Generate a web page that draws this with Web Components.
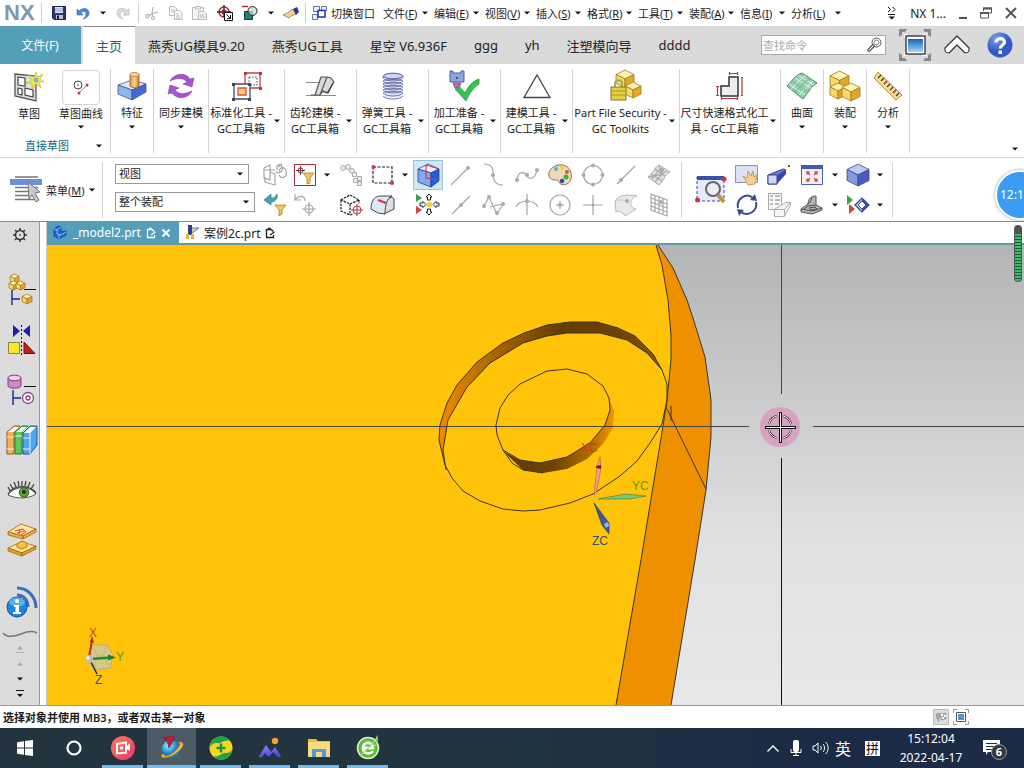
<!DOCTYPE html>
<html lang="zh-CN">
<head>
<meta charset="utf-8">
<meta name="viewport" content="width=device-width, initial-scale=1">
<title>NX</title>
<style>
html,body{margin:0;height:100%}
body{font-family:"Noto Sans","Noto Sans CJK SC",sans-serif;font-size:11px;color:#1c1c1c;background:#fff}
</style>
</head>
<body>
<nx-app></nx-app>
<script>
const BASE = `*{box-sizing:border-box}
button{font:inherit;color:inherit;background:none;border:0;padding:0;margin:0;display:inline-flex;align-items:center;justify-content:center;cursor:pointer}
u{text-underline-offset:1px}`;

const define = (name, css, html) => {
  customElements.define(name, class extends HTMLElement {
    constructor() { super(); this.attachShadow({mode: 'open'}); }
    connectedCallback() {
      if (this.shadowRoot.firstChild) return;
      const tpl = document.createElement('template');
      tpl.innerHTML = `<style>${BASE}${css}</style>` + (typeof html === 'function' ? html(this) : html);
      this.shadowRoot.append(tpl.content.cloneNode(true));
    }
  });
};

/* Small isometric box used by several pictograms */
const box = (x, y, s, a, b, c, k) => {
  const h = s / 2, q = s / 4;
  return `<g stroke="${k}" stroke-width=".8" stroke-linejoin="round"><path fill="${a}" d="M${x} ${y+q}L${x+h} ${y}L${x+s} ${y+q}L${x+h} ${y+h}Z"/><path fill="${b}" d="M${x} ${y+q}V${y+q+h}L${x+h} ${y+s}V${y+h}Z"/><path fill="${c}" d="M${x+s} ${y+q}V${y+q+h}L${x+h} ${y+s}V${y+h}Z"/></g>`;
};
const gold = (x, y, s) => box(x, y, s, '#fdf3b4', '#f6d96a', '#e0a92a', '#a57a1a');
const dot = (x, y, r = 2) => `<circle cx="${x}" cy="${y}" r="${r}" fill="#aaa"/>`;
const grey = 'fill="none" stroke="#a6a6a6" stroke-width="1.2"';

const ICONS = {
  caret: [6, 4, `<path d="M0 .5H6L3 3.5Z" fill="#111"/>`],
  caretUp: [6, 4, `<path d="M0 3.5H6L3 .5Z" fill="#aaa"/>`],
  save: [14, 14, `<path d="M.5 .5H13.5V13.5H2L.5 12Z" fill="#2b3672" stroke="#1c2452"/><path d="M3 1H11V7H3Z" fill="#dfe6f4"/><path d="M3 3H11M3 5H11" stroke="#7583b5" stroke-width=".7"/><path d="M4 9H11V13H4Z" fill="#b7c0d8"/><path d="M5 9.500H7V13H5Z" fill="#223"/>`],
  undo: [14, 14, `<path d="M1 3V9H7L5 7C7 5 10 5 10 8C10 10 9 12 7 13C11 12 13 10 13 7C13 2 7 1 3 5Z" fill="#4e87d4" stroke="#2d62b0" stroke-width=".6"/>`],
  redo: [14, 14, `<path d="M13 3V9H7L9 7C7 5 4 5 4 8C4 10 5 12 7 13C3 12 1 10 1 7C1 2 7 1 11 5Z" fill="#ddd" stroke="#bbb" stroke-width=".8"/>`],
  cut: [14, 14, `<g fill="none" stroke="#b5b5b5" stroke-width="1.2"><path d="M8 1L7 8L3 10M13 6L7 8L8 11"/><circle cx="2.500" cy="10" r="1.700"/><circle cx="8" cy="12" r="1.500"/></g>`],
  copy: [14, 14, `<g fill="#fafafa" stroke="#bbb"><path d="M.5 .5H5L8 3V9.500H.5Z"/><path d="M5.500 4.500H10L13 7V13.500H5.500Z"/><path d="M2 4H5M2 6H5M7 8H10M7 10H11M7 12H11"/></g>`],
  paste: [15, 14, `<g fill="#f4f4f4" stroke="#bbb"><path d="M.5 1.500H11.500V13.500H.5Z"/><path d="M3.500 .5H8.500V3H3.500Z"/><path d="M6.500 5.500H12L14.500 8V13.500H6.500Z"/><path d="M8 9H12M8 11H13"/></g>`],
  target: [16, 16, `<g fill="none" stroke="#a8202c" stroke-width="1.300"><circle cx="7" cy="7" r="5"/><path d="M7 0V12M0 7H14" stroke="#222"/><circle cx="7" cy="7" r="2"/></g><path d="M7.500 7.500H15.500V15.500H7.500Z" fill="#fff" stroke="#111"/><path d="M9.500 9.500L13 13M13.500 10V13.500H10" stroke="#111" fill="none"/>`],
  combine: [16, 16, `<path d="M0 1.500H6" stroke="#d22" stroke-width="1.500"/><path d="M2.500 6.500H10.500V14.500H2.500Z" fill="#23806f" stroke="#134"/><circle cx="10.500" cy="6" r="4.500" fill="#cfd9d2" fill-opacity=".7" stroke="#222"/>`],
  hand: [16, 12, `<path d="M0 8L6 5C7 3 9 2 11 3L13 7L8 9L6 11L2 9Z" fill="#f5cf98" stroke="#a1713a" stroke-width=".8"/><path d="M10 2L14 0L16 5L13 8Z" fill="#2c2f9e"/>`],
  windows: [15, 14, `<g fill="#eef3fa" stroke="#56789e"><path d="M1.500 .5H7.500V5.500H1.500Z"/><path d="M9.500 .5H14.500V4.500H9.500Z"/><path d="M.5 8.500H5.500V13.500H.5Z"/></g><path d="M6 4.500H13V11H6Z" fill="#fff" stroke="#1d2fc0" stroke-width="1.500"/>`],
  overflow: [10, 14, `<path d="M1 1L3.500 3.500L1 6M5.500 1L8 3.500L5.500 6M1 8.500H8" fill="none" stroke="#111"/><path d="M1.500 10.500H8L4.700 13.500Z" fill="#111"/>`],
  min: [8, 12, `<path d="M0 11H8" stroke="#555" stroke-width="2"/>`],
  restore: [12, 12, `<path d="M3.500 4V1H11.500V6H9" fill="none" stroke="#555"/><path d="M3 1.500H12" stroke="#555" stroke-width="2"/><path d="M.5 5.500H8.500V11H.5Z" fill="#fff" stroke="#555"/><path d="M0 6H9" stroke="#555" stroke-width="2"/>`],
  close: [12, 12, `<path d="M1 1L11 11M11 1L1 11" stroke="#555" stroke-width="2"/>`],
  search: [16, 16, `<circle cx="9.500" cy="5.500" r="4.500" fill="none" stroke="#555" stroke-width="1"/><circle cx="9.500" cy="5.500" r="2.500" fill="none" stroke="#666" stroke-width=".8"/><path d="M6 9L2 13" stroke="#333" stroke-width="3.200" stroke-linecap="round"/><path d="M6 9L2 13" stroke="#fff" stroke-width="1.200" stroke-linecap="round"/>`],
  full: [32, 32, `<path d="M0 8V0H8L6 3H3V6ZM24 0H32V8L29 6V3H26ZM0 24V32H8L6 29H3V26ZM32 24V32H24L26 29H29V26Z" fill="#888"/><path d="M5 5L9 5L5 9ZM27 5V9L23 5ZM5 27V23L9 27ZM27 27H23L27 23Z" fill="#fff"/><path d="M7 7H26V25H7Z" fill="#fff" stroke="#444" stroke-width="1.500"/><linearGradient id="g" x2="0" y2="1"><stop stop-color="#1265ba"/><stop offset="1" stop-color="#a5d2fa"/></linearGradient><path d="M9 10H24V23H9Z" fill="url(#g)"/>`],
  chevUp: [26, 20, `<path d="M13 1L25 13Q26 18 21 18L13 10L5 18Q0 18 1 13Z" fill="#fff" stroke="#333" stroke-width="1.200" stroke-linejoin="round"/>`],
  help: [26, 26, `<radialGradient id="g" cx=".35" cy=".25"><stop stop-color="#7da0ea"/><stop offset="1" stop-color="#315bc6"/></radialGradient><circle cx="13" cy="13" r="12.500" fill="url(#g)"/><path d="M9 10.500C9 5.500 17.500 5.500 17.500 10C17.500 13 13.300 13 13.300 16.500" fill="none" stroke="#fff" stroke-width="3.200"/><path d="M11.500 18.500H15V22H11.500Z" fill="#fff"/>`],
  sketch: [30, 30, `<path d="M1 2L22 4V29L1 24Z" fill="#dfe3e0" stroke="#555" stroke-width="1.300"/><g fill="#fff" stroke="#444" stroke-width="1.200"><path d="M4 5L11 6V14L4 13Z"/><path d="M4 16L8 17V23L4 22Z"/><path d="M11 16L19 18V25L11 23Z"/></g><path d="M22 0L23.500 5L29 2L26 7L30 10L25 10L27 16L22 12L18 17V11L12 11L18 8L14 3L20 5Z" fill="#f7e648" stroke="#b9a947" stroke-width=".6"/><circle cx="22" cy="8" r="2.500" fill="#74b9dd"/>`],
  curve: [18, 16, `<circle cx="6" cy="6" r="4" fill="none" stroke="#444"/><circle cx="6" cy="6" r=".8" fill="#333"/><path d="M7 14L15 6" stroke="#888"/><circle cx="7" cy="14" r="1.500" fill="#c2393c"/><circle cx="15" cy="6" r="1.500" fill="#c2393c"/>`],
  feature: [30, 30, `<linearGradient id="g"><stop stop-color="#e8912f"/><stop offset=".5" stop-color="#ffd596"/><stop offset="1" stop-color="#d2761b"/></linearGradient><g stroke="#3d5792" stroke-width=".8"><path fill="#ddeafa" d="M1 14L15 9L29 13L15 19Z"/><path fill="#8fb6ec" d="M1 14V23L15 29V19Z"/><path fill="#3f6dcc" d="M29 13V21L15 29V19Z"/></g><path d="M13 3V15C14 17 21 17 22 15V3" fill="url(#g)" stroke="#a55c19" stroke-width=".8"/><ellipse cx="17.500" cy="3.500" rx="4.500" ry="2" fill="#ffd9a3" stroke="#b56c23" stroke-width=".8"/>`],
  sync: [28, 28, `<g fill="#a354cf" stroke="#8a3fb5" stroke-width=".6"><path d="M3 9C7 1 19 0 23 7L27 6L25 15L16 12L20 10C16 5 9 6 3 9Z"/><path d="M25 19C21 27 10 28 5 21L1 22L3 13L12 16L8 18C12 23 19 22 25 19Z"/></g>`],
  standard: [30, 30, `<g fill="none" stroke="#b14a50" stroke-width="1.300"><path d="M13 2H28V17H13Z"/></g><path d="M17 6H25V14H17Z" fill="none" stroke="#444" stroke-dasharray="1.500 1.500"/><path d="M2 13H18V28H2Z" fill="#fff" stroke="#4a4a5c" stroke-width="1.300"/><path d="M6 17H14V24H6Z" fill="#ffc774" stroke="#d6503a" stroke-width="1.300"/><g fill="#b9393f"><path d="M12 1h3v3h-3zM27 1h3v3h-3zM27 16h3v3h-3z"/></g><g fill="#44445c"><path d="M0 12h3v3H0zM16 12h3v3h-3zM0 27h3v3H0zM16 27h3v3h-3z"/></g>`],
  gear: [30, 26, `<path d="M0 9.500H28M0 22.500H30" stroke="#888"/><path d="M5 22H9L15 4H21L14 22H10M14 22L17 18L21 20L28 9L25 5L21 4Z" fill="#dcdcdc" stroke="#555" stroke-width="1.200" stroke-linejoin="round"/><path d="M16 18L22 20L27 10" fill="none" stroke="#444" stroke-width="1.300"/>`],
  spring: [22, 28, `<rect x="3" y="3" width="16" height="22" fill="#e4e7f8"/><g fill="none" stroke="#5058a0" stroke-width="1"><ellipse cx="11" cy="4" rx="9.500" ry="2.800" fill="#cfd5f0"/><path d="M1 6C5 10 17 10 21 6M1 9C5 13 17 13 21 9M1 12C5 16 17 16 21 12M1 15C5 19 17 19 21 15M1 18C5 22 17 22 21 18M1 21C5 25 17 25 21 21M1 24C5 28 17 28 21 24M1 4V6M21 4V6M1 9C4 7 18 7 21 9M1 12C4 10 18 10 21 12M1 15C4 13 18 13 21 15M1 18C4 16 18 16 21 18M1 21C4 19 18 19 21 21" stroke-width=".8"/></g>`],
  check: [30, 30, `<path d="M0 0H3V2H11V0H14V11H0Z" fill="#8ca5de" stroke="#4c5f9c"/><circle cx="7" cy="7" r="1" fill="#334"/><path d="M3 12H11L9 17H5Z" fill="#c65fc8" stroke="#83398a" stroke-width=".7"/><path d="M5 18L9 15L15 22C19 14 23 10 29 8V13C23 17 19 23 16 30Z" fill="#37c14e" stroke="#1f8f3a" stroke-width=".7"/>`],
  triangle: [30, 26, `<path d="M15 2L28 24.500H2Z" fill="none" stroke="#444" stroke-width="1.300"/>`],
  security: [32, 32, gold(6,0,18)+gold(15,12,16)+`<path d="M5 18V14C5 9 12 9 12 14V18" fill="none" stroke="#a9a36a" stroke-width="2"/><rect x="1" y="17" width="15" height="13" fill="#e5d13c" stroke="#827327"/><path d="M1 21H16M1 25H16" stroke="#a8962c"/>`],
  dims: [28, 28, `<path d="M5 14H13V5H22V24H5Z" fill="#eee" stroke="#333" stroke-width="1.500"/><g stroke="#b2383d" stroke-width="1.200" fill="none"><path d="M13.500 0V3M21.500 0V3M13 1.500H22M25 5.500H27M25 23.500H27M26 5V24M0 14.500H3M0 23.500H3M1.500 14V24M5 26.500H22M5.500 25V28M21.500 25V28"/></g>`],
  surface: [32, 28, `<path d="M1 14C6 9 9 3 16 1L31 11C25 14 22 21 17 27Z" fill="#8fcfab" stroke="#4b8465"/><path d="M5 17C10 13 14 6 20 4M9 20C14 16 18 9 24 7M13 23C18 19 22 12 27 9M6 9L22 20M9 6L25 16M12 3L28 13M3 12L19 23" fill="none" stroke="#e0f6e8" stroke-width="1"/><path d="M6 9L22 20M9 20C14 16 18 9 24 7" fill="none" stroke="#4b8465" stroke-width=".7"/>`],
  assembly: [30, 30, gold(0,0,19)+gold(0,12,16)+gold(12,12,18)],
  ruler: [30, 30, `<path d="M5 1L29 24L23 29L1 7Z" fill="#f8dc94" stroke="#b88a3b"/><path d="M8 4L5 7M11 7L8 10M14 10L11 13M17 13L14 16M20 16L17 19M23 19L20 22M26 22L23 25" stroke="#334" stroke-width="1.200"/><path d="M14 10L11 13M23 19L20 22" stroke="#d33" stroke-width="1.300"/>`],
  menu: [32, 28, `<path d="M5 1H28M5 11.500H28M5 15.500H28M5 19.500H24M5 23.500H24" stroke="#777" stroke-width="1.500"/><rect y="3" width="32" height="6" fill="#6b8fdc"/><path d="M18 6L30 16L25 17L29 24L26 26L22 19L19 23Z" fill="#c9c9c9" stroke="#777"/>`],
  lnkGrey: [24, 24, `<g ${grey}><path d="M1 5L7 2V17L1 15ZM7 9L12 11V22L2 19V14M2 7H12M7 2V12"/><path d="M15 4L19 1M15 7C11 3 17 -1 19 4S14 12 13 8M17 9C15 5 21 2 23 8S18 17 16 12"/></g>`],
  filter: [22, 22, `<path d="M.5 .5H21.500V21.500H.5Z" fill="#fff" stroke="#a82838"/><circle cx="6.500" cy="6.500" r="2.500" fill="none" stroke="#733"/><path d="M6.500 2V11M2 6.500H11" stroke="#733"/><path d="M9 9H20L16 14V19L13 20V14Z" fill="#f1c757" stroke="#b37f23" stroke-width=".8"/>`],
  chain: [24, 24, `<g fill="#eee" stroke="#aaa"><circle cx="4" cy="5" r="2.500"/><circle cx="9" cy="4" r="2.500"/><circle cx="13" cy="8" r="2.500"/><path d="M13.500 9.500h4v4h-4zM14.500 15.500h4v4h-4zM18.500 18.500h4v4h-4zM18.500 13.500h4v4h-4z"/></g>`],
  marquee: [24, 22, `<path d="M2 3H21V19H2Z" fill="none" stroke="#222" stroke-width="1.200" stroke-dasharray="3 1.500"/><circle cx="2.500" cy="3" r="2" fill="#c13a3e"/><circle cx="21" cy="19" r="2" fill="#c13a3e"/>`],
  cubeSel: [30, 30, `<rect width="30" height="30" fill="#cfe8f2"/><path d="M.5 .5H29.500V29.500H.5Z" fill="none" stroke="#94c4d8"/><g stroke="#2b3f8c" stroke-width=".8"><path fill="#eaf3ff" d="M5 9L15 4L26 9L18 13Z"/><path fill="#7fa9f4" d="M5 9L18 13V27L5 22Z"/><path fill="#1a5fe0" d="M26 9V21L18 27V13Z"/></g><path d="M13 5V18L26 20M13 5L26 9" fill="none" stroke="#d23657" stroke-width="1.200"/>`],
  line1: [22, 22, `<path d="M1 21L18 4" ${grey}/>${dot(18,4)}`],
  arc1: [22, 24, `<path d="M1 1C9 1 10 5 10 11S12 22 20 22" ${grey}/>${dot(10,12)}`],
  spline: [24, 18, `<path d="M2 14C3 5 9 5 12 10S21 12 22 3" ${grey}/>${dot(2,14)}${dot(12,9)}${dot(22,4)}`],
  palette: [24, 22, `<path d="M10 1C20 -1 25 8 23 15C21 22 12 22 11 18C10 14 6 18 2 14C-2 9 4 2 10 1Z" fill="#f1d7b4" stroke="#8f7458"/><circle cx="8" cy="5" r="2" fill="#4db1d2"/><circle cx="14" cy="4" r="2" fill="#f0d330"/><circle cx="19" cy="8" r="2" fill="#e2562f"/><circle cx="18" cy="13" r="2.500" fill="#34b34a"/><circle cx="14" cy="17" r="2.200" fill="#333fc0"/>`],
  circ4: [24, 24, `<circle cx="12" cy="12" r="9.500" ${grey}/>${dot(12,2.5)}${dot(12,21.5)}${dot(2.5,12)}${dot(21.5,12)}`],
  line2: [20, 20, `<path d="M1 19L19 1" ${grey}/>${dot(5,15)}`],
  mesh: [24, 22, `<path d="M1 13C7 9 7 3 12 1L23 8C17 11 17 17 12 21Z" fill="#e2e2e2" stroke="#aaa"/><path d="M5 15C9 11 11 5 16 4M8 18C13 13 14 9 20 7M4 10L15 17M8 5L18 12M2 13L15 10L12 2" ${grey}/>${dot(15,6)}`],
  undoFilter: [24, 24, `<path d="M8 1L1 7L8 12V9C12 9 15 6 14 1C12 5 10 5 8 5Z" fill="#4ba3ae" stroke="#277782" stroke-width=".7"/><path d="M12 12H23L19 17V21L16 23V17Z" fill="#f1c757" stroke="#b37f23" stroke-width=".8"/>`],
  undoTarget: [24, 24, `<path d="M2 1V7H8M2 7C6 1 12 3 12 8" ${grey}/><circle cx="16" cy="16" r="4" ${grey}/><path d="M16 9V23M9 16H23" ${grey}/>`],
  cubeDash: [24, 24, `<path d="M2 7L11 2L20 7L11 11ZM2 7V18L11 22L14 21M11 11V22M20 7V11" fill="none" stroke="#222" stroke-width="1.200" stroke-dasharray="2.500 1"/><circle cx="18" cy="17" r="4" fill="none" stroke="#b33"/><path d="M18 11V23M12 17H24" stroke="#b33"/>`],
  solid: [26, 22, `<path d="M12 6L22 3L24 5V15L14 20Z" fill="#ddd" stroke="#445"/><path d="M1 15C1 5 6 2 11 2L22 2C17 4 15 11 15 20L8 19Z" fill="#dfe9f5" stroke="#445"/><path d="M8 6L16 9" stroke="#d33" stroke-width="2"/>`],
  points: [26, 24, `<path d="M1 1L7 5L1 9Z" fill="#35a34d"/><path d="M1 13L7 17L1 21Z" fill="#d2413a"/><g fill="#fff" stroke="#222"><path d="M14 1L17 4H15.500V7H12.500V4H11ZM14 22L17 19H15.500V16H12.500V19H11ZM5 10H8V8.500L11 11.500L8 14.500V13H5ZM24 10H21V8.500L18 11.500L21 14.500V13H24Z"/></g><circle cx="14.500" cy="11.500" r="2.800" fill="#f2d23a"/>`],
  line3: [20, 20, `<path d="M1 19L19 1" ${grey}/>${dot(10,10)}`],
  poly: [24, 22, `<path d="M2 12L7 3L15 20L21 10L8 13" ${grey}/>${dot(2,12)}${dot(7,3)}${dot(15,19)}${dot(21,10)}`],
  arcCross: [24, 24, `<path d="M12 1V22M1 14C5 6 19 6 23 14" ${grey}/>${dot(12,8)}`],
  circDot: [24, 24, `<circle cx="12" cy="12" r="10" ${grey}/><path d="M12 8V16M8 12H16" ${grey}/>${dot(12,12)}`],
  plus: [22, 22, `<path d="M11 1V21M1 11H21" ${grey}/>${dot(11,11,1.5)}`],
  sheet: [24, 24, `<path d="M1 8C5 2 12 1 23 3C16 4 14 15 22 16L11 23C10 20 5 17 2 19Z" fill="#e9e9e9" stroke="#aaa" stroke-width=".8"/><path d="M1 8C4 7 11 6 15 9" fill="none" stroke="#c4c4c4" stroke-width=".8"/>${dot(13,8)}`],
  grid: [20, 24, `<path d="M2 1L18 7V23L2 17ZM2 5L18 11M2 9L18 15M2 13L18 19M6 3V19M10 4V20M14 6V22" ${grey}/>${dot(12,9)}`],
  zoom: [32, 30, `<path d="M2 2H29V26H2Z" fill="#e4eafa" stroke="#3540c4" stroke-dasharray="3 2"/><path d="M2 1H29V5H2Z" fill="#3950b0"/><circle cx="18" cy="14" r="7" fill="#e9eef2" stroke="#666" stroke-width="2"/><path d="M23 20L29 27" stroke="#c99335" stroke-width="4"/><circle cx="29" cy="4" r="2.500" fill="#c13a3e"/><circle cx="2.500" cy="25" r="2.500" fill="#c13a3e"/>`],
  pan: [24, 22, `<path d="M.5 1.500H22.500V18.500H.5Z" fill="#dde2f3" stroke="#8c92b4"/><path d="M8 12L12 14L13 7L16 12L18 7L19 13L22 11L20 20L13 21Z" fill="#f4cf92" stroke="#b98d4c" stroke-width=".8"/>`],
  persp: [24, 22, `<path d="M1 11L16 5L19 6L10 12V20H1Z" fill="#6c77cc" stroke="#3b4694"/><path d="M1 11H10V20H1Z" fill="#cfd6f3" stroke="#3b4694"/><path d="M10 12L19 6V10L10 20Z" fill="#3947a8"/><path d="M21 1h2v2h-2z" fill="#b33"/>`],
  fit: [22, 20, `<path d="M.5 .5H21.500V19.500H.5Z" fill="#eef1fa" stroke="#4c5fa8"/><path d="M0 0H22V4H0Z" fill="#4258b4"/><g fill="none" stroke="#d0463a" stroke-width="1.300"><path d="M9 10L6 7M6 9.500V7H8.500M13 10L16 7M13.500 7H16V9.500M9 13L6 16M6 13.500V16H8.500M13 13L16 16M16 13.500V16H13.500"/></g>`],
  cube: [24, 24, box(1,1,22,'#bcc9f4','#8598e0','#4a5cb9','#39468c')],
  rotate: [24, 24, `<g fill="none" stroke="#3e4c8e" stroke-width="2"><path d="M3 15C1 6 11 -1 18 5"/><path d="M21 9C23 18 13 24 6 19"/></g><path d="M15 7L22 8L20 1ZM9 17L2 16L4 23Z" fill="#3e4c8e"/>`],
  layout: [24, 24, `<g fill="#f6f6f6" stroke="#aaa"><path d="M1.500 .5H14.500V16.500H1.500Z"/><path d="M3 3H6M8 3H13M3 7H6M8 7H13M3 11H6M8 11H12" stroke-width="1.500"/><path d="M7.500 16.500H17.500V23.500H7.500ZM7.500 16.500L18.500 9.500H23.500V12.500L17.500 23M17.500 16.500L23.500 9.500"/></g>`],
  base: [24, 22, `<path d="M1 15L8 10C8 5 11 2 16 2V11L22 14V16L12 20L1 18Z" fill="#b5b5b5" stroke="#555"/><path d="M8 10C10 9 12 5 12 3M4 15L8 12L16 11M1 15L12 17L22 14M9 14L15 13L17 15L11 16Z" fill="none" stroke="#444" stroke-width=".9"/>`],
  snap: [24, 20, `<path d="M1 0L7 5L1 10Z" fill="#35a34d"/><path d="M3 9L9 14L3 19Z" fill="#d2413a"/><path d="M9 10L16 3L23 10L16 17Z" fill="#b9c5ef" stroke="#39468c" stroke-width="1.200"/><path d="M16 3V17L23 10Z" fill="#3d4ea8"/><path d="M12 10L16 6L20 10L16 14Z" fill="#fff" stroke="#39468c"/>`],
  cog: [14, 14, `<circle cx="7" cy="7" r="4.500" fill="none" stroke="#333" stroke-width="1.500"/><path d="M7 0V3M7 11V14M0 7H3M11 7H14M2 2L4 4M12 2L10 4M2 12L4 10M12 12L10 10" stroke="#333" stroke-width="1.500"/><circle cx="7" cy="7" r="1" fill="#555"/>`],
  navAsm: [30, 32, gold(3,0,9)+gold(2,7,9)+gold(9,7,9)+`<path d="M17 15.500H29" stroke="#111"/><path d="M5 16V31M5 25H13" stroke="#1c2395" fill="none" stroke-width="1.400"/>`+gold(15,20,10)],
  navMirror: [30, 30, `<path d="M6 0L13 6L6 12ZM23 0L16 6L23 12Z" fill="#1d20ad"/><path d="M14.500 0V30" stroke="#111" stroke-dasharray="2 2"/><path d="M1.500 17.500H12.500V28.500H1.500Z" fill="#f9e92e" stroke="#884"/><path d="M17 17L28 28.500H17Z" fill="#c41c1c" stroke="#711"/>`],
  navPart: [30, 32, `<path d="M1 4V12C2 15 13 15 14 12V4" fill="#c98bc6" stroke="#7a3d7c"/><ellipse cx="7.500" cy="4" rx="6.500" ry="2.800" fill="#edd1ec" stroke="#7a3d7c"/><path d="M17 12.500H29" stroke="#111"/><path d="M6 16V31M6 24H14" stroke="#1c2395" stroke-width="1.400"/><circle cx="21" cy="24" r="5.500" fill="#fff" stroke="#8c3c86" stroke-width="1.300"/><circle cx="21" cy="24" r="2" fill="none" stroke="#8c3c86" stroke-width="1.300"/>`],
  books: [32, 30, `<path d="M1 7L8 1H14L8 7V29H1Z" fill="#f5b15a" stroke="#a55612"/><path d="M9 7L16 1H22L16 7V29H9Z" fill="#5cc85a" stroke="#1d7a24"/><path d="M17 8L24 1H31V20L24 29H17Z" fill="#4fa7ee" stroke="#1859a5"/><path d="M2 7L8 2H13L8 7ZM10 7L16 2H21L16 7ZM18 8L24 2H30L24 8Z" fill="#fff"/><path d="M24 8V29M1 12H8M9 11H16M17 13H24M17 24H24M1 24H8" fill="none" stroke="#fff" stroke-width=".9"/>`],
  eye: [30, 18, `<path d="M1 14C7 5 22 4 29 13C22 18 9 18 1 14Z" fill="#fff" stroke="#555"/><circle cx="17" cy="11.500" r="4.800" fill="#5f9e38" stroke="#375c24"/><circle cx="17" cy="11" r="2" fill="#132"/><path d="M1 13C6 4 22 3 29 12M3 10L1 6M6 8L3 3M9 6L7 1M12 5L11 0M15 5V0M18 5L19 0M21 6L23 1M24 8L27 3" fill="none" stroke="#444" stroke-width="1.300"/>`],
  mold: [30, 34, `<g stroke="#a26713" stroke-width=".8"><path d="M1 9L14 1L29 6L16 13Z" fill="#ffe3a3"/><path d="M1 9V12L16 16V13ZM16 13L29 6V9L16 16Z" fill="#f0b23c"/><path d="M1 25L14 19L29 23L15 30Z" fill="#ffe49b"/><path d="M1 25V28L15 33V30ZM15 30L29 23V26L15 33Z" fill="#e9a127"/><path d="M10 21L15 18L20 20V24L14 26L10 24Z" fill="#ffbe3a"/></g><path d="M8 8L16 6L19 9L14 12M10 10L17 8M13 6L12 11" stroke="#d44" fill="none"/>`],
  info: [32, 34, `<g fill="none" stroke="#3f6cb8" stroke-width="3"><path d="M11 10C18 10 22 15 22 22"/><path d="M11 3C22 3 30 12 30 23"/></g><circle cx="11" cy="22" r="10" fill="#1c85dd" stroke="#145596"/><ellipse cx="11" cy="17" rx="8" ry="4.500" fill="#8ac9f8" fill-opacity=".6"/><path d="M8 20H13V27H15V29H7V27H9.500V22H8Z" fill="#fff"/><circle cx="11" cy="16" r="2" fill="#fff"/>`],
  wave: [36, 8, `<path d="M1 3C6 9 14 6 19 4S30 0 35 3" fill="none" stroke="#777" stroke-width="1.500"/>`],
  top: [8, 8, `<path d="M0 7.500H8" stroke="#aaa"/><path d="M1 4.500L4 1L7 4.500Z" fill="#aaa"/>`],
  end: [8, 8, `<path d="M0 .5H8" stroke="#111"/><path d="M1 4L4 7L7 4Z" fill="#111"/>`],
  part: [16, 14, `<path d="M2 3L6 0L9 1V6L14 5V9L7 13L2 10Z" fill="#1f64d8" stroke="#103d96" stroke-width=".8"/><path d="M2 3L5 4V8L9 9L14 6M5 4L9 1M7 13V9" fill="none" stroke="#a9d0ff" stroke-width=".8"/>`],
  edit: [10, 12, `<path d="M1.500 2.500H6L8.500 4.500M8.500 8V10.500H1.500V2M3 1.500H5.500M5 8L9.500 5" fill="none" stroke="currentColor" stroke-width="1.300"/>`],
  x: [10, 10, `<path d="M1.500 1.500L8.500 8.500M8.500 1.500L1.500 8.500" stroke="#fff" stroke-width="2"/>`],
  part2: [15, 15, `<path d="M3 0H7V10H3Z" fill="#333b91"/><path d="M7 3H14L7 8" stroke="#777" fill="#ccc"/><path d="M1 9H4V14H1ZM6 9H9V14H6Z" fill="#e2b33d"/>`],
  flag: [16, 16, `<path d="M.5 .5H15.500V15.500H.5Z" fill="#ddd" stroke="#bbb"/><path d="M6 13L3 5" stroke="#888"/><path d="M3 5L7 4V9L4 10ZM7 5L13 4V10L8 11Z" fill="#aaa" stroke="#999" stroke-width=".6"/><path d="M8 5h2v2H8zM11 6h2v2h-2zM9 8h2v2H9z" fill="#fff"/>`],
  full2: [16, 16, `<path d="M.5 4V.5H4M12 .5H15.500V4M.5 12V15.500H4M15.500 12V15.500H12" fill="none" stroke="#999"/><path d="M3.500 3.500H12.500V12.500H3.500Z" fill="#fff" stroke="#555"/><path d="M5 5H11V11H5Z" fill="#5b95cf"/>`],
  win: [16, 16, `<path d="M0 2.200L7 1.200V7.500H0ZM8 1L16 0V7.500H8ZM0 8.500H7V14.800L0 13.800ZM8 8.500H16V16L8 15Z" fill="#fff"/>`],
  cortana: [16, 16, `<circle cx="8" cy="8" r="6.500" fill="none" stroke="#fff" stroke-width="2.200"/>`],
  rec: [24, 24, `<linearGradient id="g" x2="1" y2="1"><stop stop-color="#ff7a4f"/><stop offset="1" stop-color="#e83574"/></linearGradient><circle cx="12" cy="12" r="12" fill="url(#g)"/><path d="M6 8L15 6.500V16.500L6 17.500Z" fill="none" stroke="#fff" stroke-width="2"/><path d="M16 10L19 7V15L16 13" fill="#fff"/><circle cx="10.500" cy="12" r="1.800" fill="#fff"/>`],
  nx: [24, 24, `<radialGradient id="g" cx=".35" cy=".3"><stop stop-color="#a5efff"/><stop offset="1" stop-color="#137bc2"/></radialGradient><circle cx="11" cy="13" r="9" fill="url(#g)"/><path d="M2 18C-1 23 7 23 15 18S26 6 20 6C19 6 18 6 17 7C22 6 20 11 14 16S3 21 4 18Z" fill="#f0b83e" stroke="#a87622" stroke-width=".6"/><path d="M3 2L13 0L14 3L9 12L7 5Z" fill="#c71d36" stroke="#7d0d20" stroke-width=".6"/>`],
  safe: [24, 24, `<circle cx="12" cy="12" r="11.500" fill="#f8d61e"/><path d="M1 12A11 11 0 0 1 21 5C15 3 12 8 8 7C4 7 2 9 1 12ZM23 13A11 11 0 0 1 4 20C10 22 12 17 16 17C20 17 22 16 23 13Z" fill="#15a54d"/><path d="M12 7.500V16.500M7.500 12H16.500" stroke="#159246" stroke-width="2.500"/>`],
  mount: [24, 22, `<linearGradient id="g" x2=".3" y2="1"><stop stop-color="#a384fa"/><stop offset="1" stop-color="#3f4fd0"/></linearGradient><path d="M1 19L8 8L13 15L17 10L23 19Q22 21 20 20L15 15L11 20Q8 18 7 16L4 20Q1 21 1 19Z" fill="url(#g)"/><circle cx="17" cy="4" r="3.200" fill="#f3a12b"/>`],
  folder: [22, 20, `<path d="M0 1H8L10 3H22V19H0Z" fill="#f3b83c"/><path d="M0 4H22V19H0Z" fill="#fadb7c"/><path d="M4 19V11H18V19H14V14H8V19Z" fill="#4c9de0"/>`],
  browser: [24, 24, `<circle cx="12" cy="12" r="10.500" fill="#58bb34" stroke="#dff3d2" stroke-width="1.500"/><path d="M6 12H17C17 5 7 5 7 12C7 18 14 19 17 15" fill="none" stroke="#fff" stroke-width="2.800"/><path d="M4 20C10 14 18 8 21 1C22 6 20 10 17 11" fill="none" stroke="#9fe07a" stroke-width="1.300"/>`],
  chev: [12, 7, `<path d="M.5 6.500L6 1L11.500 6.500" fill="none" stroke="#fff" stroke-width="1.300"/>`],
  mic: [12, 16, `<rect x="3" width="6" height="12" rx="2" fill="#fff"/><path d="M1 9V12.500H11V9M6 13V15.500M3 15.500H9" fill="none" stroke="#fff"/>`],
  sound: [17, 14, `<path d="M1 5H3L6 2V12L3 9H1Z" fill="none" stroke="#fff"/><path d="M8.500 5C9.500 6 9.500 8 8.500 9M11 3C13 5 13 9 11 11M13.500 1C17 4 17 10 13.500 13" fill="none" stroke="#fff"/>`],
  note: [17, 16, `<path d="M0 0H17V12H5L3 15V12H0Z" fill="#fff"/><path d="M3 3.500H14M3 6.500H14M3 9.500H14" stroke="#1c2c46"/>`]
};

define('nx-icon', `:host{display:inline-flex;flex:none}svg{display:block;overflow:visible}`, el => {
  const [w, h, art] = ICONS[el.getAttribute('name')];
  return `<svg width="${w}" height="${h}" viewBox="0 0 ${w} ${h}" aria-hidden="true">${art}</svg>`;
});
const ic = n => `<nx-icon name="${n}"></nx-icon>`;
const tool = n => `<button type="button" aria-label="${n}">${ic(n)}</button>`;

/* Drop-down entry of the classic menu bar */
define('nx-menu', `:host{display:block;width:51px;flex:none}button{width:100%;height:100%;justify-content:space-between;padding-right:6px;white-space:nowrap}:host([key="L"]){width:56px}`,
  el => `<button type="button"><span><slot></slot>(<u>${el.getAttribute('key')}</u>)</span>${ic('caret')}</button>`);

define('nx-titlebar', `:host{display:flex;align-items:center;height:26px;overflow:hidden}
.logo{font:bold 22px "Liberation Sans",sans-serif;color:#8096a8;width:41px;padding-left:4px;flex:none}
.set{display:flex;align-items:center;justify-content:space-between;height:20px;border-left:1px solid #d0d0d0;flex:none}
.a{width:97px;padding:0 8px 0 10px}.b{width:167px;padding:0 6px}.c{padding:0 8px 0 6px}.c button{gap:4px;white-space:nowrap}
.app{margin-left:auto;display:flex;align-items:center;gap:13px;padding-right:7px;flex:none}.app span{font-size:12px}`,
`<div class="logo">NX</div>
<div class="set a">${tool('save')}${tool('undo')}${tool('caret')}${tool('redo')}</div>
<div class="set b">${['cut','copy','paste','target','combine','caret','hand'].map(tool).join('')}</div>
<div class="set c"><button type="button">${ic('windows')}切换窗口</button></div>
<nx-menu key="F">文件</nx-menu><nx-menu key="E">编辑</nx-menu><nx-menu key="V">视图</nx-menu><nx-menu key="S">插入</nx-menu><nx-menu key="R">格式</nx-menu><nx-menu key="T">工具</nx-menu><nx-menu key="A">装配</nx-menu><nx-menu key="I">信息</nx-menu><nx-menu key="L">分析</nx-menu>
<div class="app">${ic('overflow')}<span>NX 1...</span>${tool('min')}${tool('restore')}${tool('close')}</div>`);

define('nx-tabs', `:host{display:flex;height:38px;background:#dadada;font-size:13px}
nav{display:flex;flex:1;min-width:0}a{display:flex;align-items:center;padding:0 14px 0 13px;color:#222;text-decoration:none;white-space:nowrap}
.file{background:#549fb8;color:#fff;width:81px;justify-content:center;margin-right:2px;font-size:12px}
.on{background:#fff;color:#14657c;border-top:1px solid #888;padding:0 13px}
.right{display:flex;align-items:center;padding-right:11px;gap:13px}
label{display:flex;align-items:center;width:125px;height:20px;border:1px solid #aaa;background:#fff;padding-right:2px}
input{font:inherit;font-size:11px;border:0;outline:0;background:none;min-width:0;width:100%;padding:0 1px}input::placeholder{color:#aaa;opacity:1}
.tail{display:flex;margin-left:4px}`,
`<nav><a class="file" href="#">文件(F)</a><a class="on" href="#">主页</a><a href="#">燕秀UG模具9.20</a><a href="#">燕秀UG工具</a><a href="#">星空 V6.936F</a><a href="#">ggg</a><a href="#">yh</a><a href="#">注塑模向导</a><a href="#">dddd</a></nav>
<div class="right"><label><input type="text" aria-label="查找命令" placeholder="查找命令">${ic('search')}</label>${tool('full')}${tool('chevUp')}<div class="tail">${tool('help')}</div></div>`);

define('nx-command', `:host{display:block;flex:none;height:84px;border-right:1px solid #d4d4d4}
button{width:100%;display:grid;grid-template-rows:36px auto 11px;justify-items:center;line-height:16px;white-space:pre;text-align:center}
.two{grid-template-rows:36px auto;grid-template-columns:1fr 8px 3px}.two .pic{grid-column:1/4}
.pic{display:flex;align-items:center;justify-content:center;height:33px;align-self:start}`,
el => { const two = el.hasAttribute('wide');
  return `<button type="button" class="${two ? 'two' : ''}"><span class="pic">${ic(el.getAttribute('icon'))}</span><span><slot></slot></span>${ic('caret')}</button>`; });

const cmd = (w, icon, text, wide) => `<nx-command style="width:${w}px" icon="${icon}"${wide ? ' wide' : ''}>${text}</nx-command>`;
define('nx-ribbon', `:host{display:flex;height:94px;border-bottom:1px solid #d4d4d4;padding-top:5px;overflow:hidden;position:relative}
.first{width:111px;height:84px;border-right:1px solid #d4d4d4;flex:none;display:flex;flex-direction:column;justify-content:space-between}
.row{display:grid;grid-template-columns:58px 46px}.row button{display:grid;grid-template-rows:36px 16px 12px;justify-items:center;align-items:center;align-content:start;white-space:nowrap}
.frame{border:1px solid #d4d4d4;border-radius:4px;width:38px;height:35px;display:flex;align-items:center;justify-content:center}
.title{display:flex;justify-content:space-between;align-items:center;color:#14657c;padding:0 8px 0 25px;line-height:14px}
.more{margin-left:auto;align-self:flex-end;padding:0 6px 6px 0;display:flex}`,
`<div class="first"><div class="row"><button type="button">${ic('sketch')}<span>草图</span></button><button type="button"><span class="frame">${ic('curve')}</span><span>草图曲线</span>${ic('caret')}</button></div><div class="title"><span>直接草图</span>${ic('caret')}</div></div>
${cmd(43,'feature','特征')}${cmd(55,'sync','同步建模')}${cmd(76,'standard','标准化工具 -\nGC工具箱',1)}${cmd(72,'gear','齿轮建模 -\nGC工具箱',1)}${cmd(72,'spring','弹簧工具 -\nGC工具箱',1)}${cmd(72,'check','加工准备 -\nGC工具箱',1)}${cmd(72,'triangle','建模工具 -\nGC工具箱',1)}${cmd(107,'security','Part File Security -\nGC Toolkits',1)}${cmd(101,'dims','尺寸快速格式化工\n具 - GC工具箱',1)}${cmd(43,'surface','曲面')}${cmd(43,'assembly','装配')}${cmd(43,'ruler','分析')}
<div class="more">${tool('caret')}</div>`);

define('nx-select', `:host{display:block;position:relative;height:20px}select{appearance:none;font:inherit;color:inherit;width:100%;height:100%;border:1px solid #999;border-radius:0;background:#fff;padding:0 3px}
nx-icon{position:absolute;right:6px;top:8px;pointer-events:none}`,
el => `<select aria-label="${el.getAttribute('label')}"><option>${el.getAttribute('value')}</option></select><nx-icon name="caret"></nx-icon>`);

define('nx-toolbar', `:host{display:flex;align-items:center;height:64px;border-bottom:1px solid #8a8a8a;position:relative;overflow:hidden}
.menu{width:103px;height:56px;border-right:1px solid #d4d4d4;justify-content:flex-start;padding-left:10px;gap:4px;white-space:nowrap;flex:none}
.sel{display:grid;gap:8px;padding:0 0 4px 12px;width:157px;flex:none}.sel nx-select:first-child{width:134px}.sel nx-select:last-child{width:140px}
.grid{display:grid;grid-template-rows:30px 30px;flex:none}.grid>*{display:flex;align-items:center;justify-content:center}
.g1{grid-template-columns:30px 30px 14px 34px 30px 14px 32px repeat(7,33px)}
.big{border-left:1px solid #d4d4d4;height:56px;width:51px;padding-left:8px;margin-left:6px;flex:none}
.g2{grid-template-columns:30px 34px 32px 14px 32px 12px}
.end{height:56px;border-left:1px solid #d4d4d4;margin-left:6px}
.clock{position:absolute;left:995px;top:12px;width:50px;height:50px;border-radius:50%;background:#3a9cf5;border:2px solid #fff;box-shadow:0 0 3px #888;color:#fff;font-size:12px;line-height:46px;padding-left:3px;white-space:nowrap}`,
`<button class="menu" type="button">${ic('menu')}<span>菜单(<u>M</u>)</span>${ic('caret')}</button>
<div class="sel"><nx-select label="类型过滤器" value="视图"></nx-select><nx-select label="选择范围" value="整个装配"></nx-select></div>
<div class="grid g1">${['lnkGrey','filter','caret','chain','marquee','caret','cubeSel','line1','arc1','spline','palette','circ4','line2','mesh','undoFilter','undoTarget','','cubeDash','solid','','points','line3','poly','arcCross','circDot','plus','sheet','grid'].map(n => n ? tool(n) : '<span></span>').join('')}</div>
<button class="big" type="button" aria-label="缩放">${ic('zoom')}</button>
<div class="grid g2">${['pan','persp','fit','caret','cube','caret','rotate','layout','base','caret','snap','caret'].map(tool).join('')}</div><div class="end"></div>
<div class="clock">12:1</div>`);

define('nx-sidebar', `:host{display:flex;flex-direction:column;align-items:center;width:40px;flex:none;background:#dcdcdc;border-right:1px solid #999}
button{flex:none;height:50px;width:39px}.nav{padding-left:4px}.cog{height:26px;margin-bottom:17px}.gap{margin-top:12px}.s{height:15px}.wave{height:14px}`,
`<button class="cog" type="button" aria-label="设置">${ic('cog')}</button>${['navAsm','navMirror','navPart','books','eye','mold'].map(n => `<button class="nav" type="button" aria-label="${n}">${ic(n)}</button>`).join('')}
<button class="nav gap" type="button" aria-label="信息">${ic('info')}</button><button class="wave" type="button" aria-label="分隔">${ic('wave')}</button>
${['top','caretUp','caret','end'].map(n => `<button class="s" type="button" aria-label="${n}">${ic(n)}</button>`).join('')}`);

define('nx-doctabs', `:host{display:flex;height:23px;border-bottom:2px solid #6798a6;flex:none;font-size:12px}
div{display:flex;align-items:center;gap:6px;padding:0 7px;white-space:nowrap}.on{background:#549fb8;color:#fff;width:132px;padding:0 5px;gap:5px}button{height:16px}.off{gap:4px;padding:0 6px}`,
`<div class="on">${ic('part')}<span>_model2.prt</span>${ic('edit')}${tool('x')}</div><div class="off">${ic('part2')}<span>案例2c.prt</span>${ic('edit')}</div>`);

define('nx-viewport', `:host{display:block;flex:1;min-height:0;overflow:hidden}svg{display:block;width:100%;height:100%}text{font-family:"Liberation Sans",sans-serif;font-size:12px}`,
`<svg viewBox="47 245 977 460" preserveAspectRatio="xMinYMin slice" role="img" aria-label="三维模型视图">
<defs><linearGradient id="sky" x2="0" y2="1"><stop stop-color="#b3b4b5"/><stop offset=".65" stop-color="#e0e1e2"/><stop offset="1" stop-color="#e7e8ea"/></linearGradient>
<linearGradient id="rim"><stop stop-color="#f08c00"/><stop offset=".25" stop-color="#a96500"/><stop offset=".55" stop-color="#633c00"/><stop offset=".8" stop-color="#6d4300"/><stop offset="1" stop-color="#8a5600"/></linearGradient>
<linearGradient id="hole"><stop stop-color="#603b00"/><stop offset=".45" stop-color="#6d4300"/><stop offset=".8" stop-color="#b76d00"/><stop offset="1" stop-color="#f39500"/></linearGradient></defs>
<rect x="47" y="245" width="977" height="460" fill="url(#sky)"/>
<path d="M656 245H658L673 268L687 300L693 318L705 357L711 400L711 437L706 490L695 560L671 705H610Z" fill="#ef9000"/>
<path d="M47 245H656L662 265L668 300L671 335L671 360L667 400L663 426L641 560L616 705H47Z" fill="#ffc409"/>
<g fill="none" stroke="#3b3530" stroke-width="1"><path d="M656 245L662 265L668 300L671 335L671 360L667 400L663 426L641 560L616 705"/><path d="M658 245L673 268L687 300L693 318L705 357L711 400L711 437L706 490L695 560L671 705"/><path d="M666 407L706 489M671 406V421"/></g>
<path d="M445 465L439 440L440 425L447 403L457 385L477 362L503 343L524 333L547 325L570 322L597 322L618 328L635 336L653 354L662 370L647 353L627 340L600 333L567 333L547 336L523 343L490 363L467 387L448 420L443 450Z" fill="url(#rim)"/>
<path d="M609 398L614 411L613 428L603 444L587 459L567 469L543 473L523 470L503 451L520 460L540 463L567 457L590 443L605 425L610 410Z" fill="url(#hole)"/>
<g fill="none" stroke="#3b3530" stroke-width="1" stroke-linejoin="round"><path d="M445 465L439 440L440 425L447 403L457 385L477 362L503 343L524 333L547 325L570 322L597 322L618 328L635 336L653 354L662 370L667 384L667 400L662 424L650 443L637 461L620 476L593 494L570 503L540 510L523 511L503 509L480 501L463 491L452 478L445 465"/><path d="M446 470L443 450L448 420L467 387L490 363L523 343L547 336L567 333L600 333L627 340L647 353L662 370"/><path d="M496 425L500 408L508 395L520 384L547 371L567 369L587 374L603 386L609 398L610 410L605 425L590 443L567 457L540 463L520 460L503 450L497 435Z"/><path d="M503 450L512 463L523 470L543 473"/></g>
<path d="M47 426.500H749M813 426.500H1024M781.500 245V394M781.500 458V705" stroke="#474747" fill="none"/>
<path d="M781.500 458V705" stroke="#111"/>
<circle cx="780" cy="427" r="20" fill="#d8a3c0"/><g fill="none"><circle cx="780" cy="427" r="11.500" stroke="#222" stroke-width="2" stroke-dasharray="12 6" stroke-dashoffset="-3"/><circle cx="780" cy="427" r="11.500" stroke="#fff" stroke-width="1" stroke-dasharray="12 6" stroke-dashoffset="-3"/><path d="M765 427.500H796M780.500 412V443" stroke="#111" stroke-width="3"/><path d="M766 427.500H795M780.500 413V442" stroke="#fff"/></g>
<path d="M594 495L597 468L600 457L601 468L596 494Z" fill="#f4a091" stroke="#b65648" stroke-width=".6"/><path d="M596 466L601 465V469L596 468Z" fill="#6d2718"/>
<path d="M598 499L625 494L646 496L630 499Z" fill="#7cc77b" stroke="#397c3c" stroke-width=".6"/><path d="M594 503L609 523V534L602 525Z" fill="#3c5b9b" stroke="#203561" stroke-width=".6"/><path d="M604 524L608 522L609 526L606 528Z" fill="#8db6f6"/>
<text x="581" y="452" fill="#d23c1e">XC</text><text x="632" y="490" fill="#5a9a1c">YC</text><text x="592" y="545" fill="#3e5070">ZC</text>
<path d="M92 645H107L113 655L110 668L94 670L89 660Z" fill="#d7c88a" stroke="#b7a989" stroke-width=".8"/><path d="M92 645L97 656L94 670M107 645L103 656L110 668M97 656H103" stroke="#b9ae8b" stroke-width=".7" fill="none"/>
<path d="M89 657L92 640" stroke="#c52f13" stroke-width="2"/><path d="M90 642L92 636L94 643Z" fill="#a32b10"/><path d="M91 659L111 657.500" stroke="#228b2a" stroke-width="2.500"/><path d="M108 654.500L116 657.500L108 660.500Z" fill="#257b28"/><path d="M91 662L97 674" stroke="#15306b" stroke-width="1.500"/><circle cx="89" cy="659" r="4" fill="#bdbdb4"/><circle cx="88" cy="658" r="1.800" fill="#eee"/>
<text x="89" y="637" fill="#cf4c1b">X</text><text x="116" y="661" fill="#5a9a1c">Y</text><text x="95" y="684" fill="#3e5070">Z</text>
</svg>`);

define('nx-status', `:host{display:flex;align-items:center;justify-content:space-between;height:23px;border-top:1px solid #999;padding:0 55px 0 3px;font-weight:600;flex:none}div{display:flex;gap:4px}`,
`<span>选择对象并使用 MB3，或者双击某一对象</span><div>${tool('flag')}${tool('full2')}</div>`);

define('nx-taskbar', `:host{display:flex;justify-content:space-between;height:40px;background:linear-gradient(90deg,#22353f,#22353f 45%,#1b2a45 80%);color:#fff;flex:none}
.apps{display:flex}.apps button{width:49px;height:40px;border:solid transparent;border-width:3px 0}.apps .run{border-image:linear-gradient(90deg,transparent 4px,#76b9ed 4px,#76b9ed 45px,transparent 45px) 0 0 3 0 / 0 0 3px 0}.apps .on{background:#4b5c66;border-bottom-color:#76b9ed}
.tray{display:flex;align-items:center;padding-right:14px}.tray>*{flex:none}
.t1{width:24px}.t2{width:22px}.t3{width:26px}.lang{width:20px;font-size:16px;text-align:center}
.ime{width:15px;height:15px;background:#fff;color:#111;font-size:13px;line-height:15px;text-align:center;margin:0 12px 0 12px}
time{font-size:12px;line-height:19px;text-align:center;width:78px}.bell{width:27px;position:relative;justify-content:flex-start;margin-left:13px}
b{position:absolute;left:8px;top:4px;width:16px;height:16px;border-radius:50%;background:#33363d;border:1px solid #999;font-size:11px;line-height:14px}`,
`<div class="apps">${tool('win')}${tool('cortana')}<button class="run" type="button" aria-label="录屏">${ic('rec')}</button><button class="on" type="button" aria-label="NX">${ic('nx')}</button>${['safe','mount','folder','browser'].map(n => `<button class="run" type="button" aria-label="${n}">${ic(n)}</button>`).join('')}</div>
<div class="tray"><button class="t1" type="button" aria-label="更多">${ic('chev')}</button><button class="t2" type="button" aria-label="麦克风">${ic('mic')}</button><button class="t3" type="button" aria-label="音量">${ic('sound')}</button><span class="lang">英</span><span class="ime">拼</span><time>15:12:04<br>2022-04-17</time><button class="bell" type="button" aria-label="通知">${ic('note')}<b>6</b></button></div>`);

define('nx-app', `:host{display:flex;flex-direction:column;min-height:100vh}
nx-titlebar,nx-tabs,nx-ribbon,nx-toolbar{flex:none}
main{flex:1;display:flex;min-height:300px;position:relative}.doc{flex:1;display:flex;flex-direction:column;min-width:0;margin-left:6px;border-left:1px solid #c9c9c9}
nx-viewport{height:0}
.level{position:absolute;right:2px;top:3px;width:8px;height:57px;border-radius:4px;border:1px solid #555;border-top-width:9px;background:repeating-linear-gradient(#3bbd68 0 2px,#1d5734 2px 3px)}`,
`<nx-titlebar></nx-titlebar><nx-tabs></nx-tabs><nx-ribbon></nx-ribbon><nx-toolbar></nx-toolbar>
<main><nx-sidebar></nx-sidebar><div class="doc"><nx-doctabs></nx-doctabs><nx-viewport></nx-viewport></div><div class="level"></div></main>
<nx-status></nx-status><nx-taskbar></nx-taskbar>`);
</script>
</body>
</html>
